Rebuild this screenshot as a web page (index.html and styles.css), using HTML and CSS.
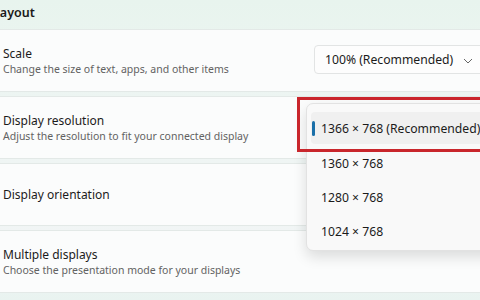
FILE: index.html
```html
<!DOCTYPE html>
<html>
<head>
<meta charset="utf-8">
<link rel="stylesheet" href="styles.css">
</head>
<body>
<div class="page">
  <div class="heading">Layout</div>
  <div class="card">
    <div class="text">
      <div class="title">Scale</div>
      <div class="sub">Change the size of text, apps, and other items</div>
    </div>
    <div class="combo">
      <span>100% (Recommended)</span>
      <svg class="chev" width="10" height="6" viewBox="0 0 10 6"><path d="M1 1 L5 5 L9 1" fill="none" stroke="#666" stroke-width="1"/></svg>
    </div>
  </div>
  <div class="card">
    <div class="text">
      <div class="title">Display resolution</div>
      <div class="sub">Adjust the resolution to fit your connected display</div>
    </div>
  </div>
  <div class="card">
    <div class="text">
      <div class="title">Display orientation</div>
    </div>
  </div>
  <div class="card">
    <div class="text">
      <div class="title">Multiple displays</div>
      <div class="sub">Choose the presentation mode for your displays</div>
    </div>
  </div>
</div>
<div class="menu">
  <div class="item selected"><span class="bar"></span>1366 × 768 (Recommended)</div>
  <div class="item">1360 × 768</div>
  <div class="item">1280 × 768</div>
  <div class="item">1024 × 768</div>
</div>
<div class="highlight"></div>
</body>
</html>
```
FILE: styles.css
```css
html, body {
  margin: 0;
  padding: 0;
  width: 480px;
  height: 300px;
  overflow: hidden;
}
body {
  background: linear-gradient(180deg, #e8f4ee 0%, #eef5f3 40%, #f1f5f5 80%, #e9f3f0 100%);
  font-family: "Noto Sans", "Open Sans", sans-serif;
  color: #1b1b1b;
  position: relative;
}
.page {
  margin-left: -16px;
  width: 530px;
  display: flex;
  flex-direction: column;
  gap: 4px;
}
.heading {
  height: 25px;
  padding-left: 9px;
  font-size: 12.5px;
  font-weight: 600;
  line-height: 26px;
  color: #1a1a1a;
}
.card {
  height: 61px;
  background: #fbfcfc;
  border: 1px solid #e3e9e7;
  border-radius: 4px;
  display: flex;
  align-items: center;
  padding-left: 18px;
  position: relative;
}
.title {
  font-size: 12px;
  line-height: 17px;
  color: #1b1b1b;
}
.sub {
  font-size: 10.5px;
  line-height: 15px;
  color: #626262;
}
.combo {
  position: absolute;
  left: 329px;
  top: 15px;
  width: 200px;
  height: 29px;
  border: 1px solid #e2e4e4;
  border-radius: 4px;
  background: #fdfdfd;
  display: flex;
  align-items: center;
  padding-left: 10px;
  font-size: 12.2px;
  box-sizing: border-box;
}
.chev {
  position: absolute;
  left: 148px;
  top: 12px;
}
.menu {
  position: absolute;
  left: 306px;
  top: 103px;
  width: 200px;
  height: 148px;
  background: #f9f9f9;
  border: 1px solid #e2e2e2;
  border-radius: 7px;
  box-shadow: 0 6px 14px rgba(0,0,0,0.13);
  padding-top: 8px;
  box-sizing: border-box;
}
.item {
  height: 34px;
  display: flex;
  align-items: center;
  padding-left: 14px;
  font-size: 12.2px;
  color: #1b1b1b;
  position: relative;
}
.item.selected {
  margin: 0 4px;
  padding-left: 10px;
  height: 32px;
  margin-bottom: 2px;
  background: #f0f0f0;
  border-radius: 4px;
}
.bar {
  position: absolute;
  left: 1px;
  top: 9px;
  width: 3px;
  height: 15px;
  border-radius: 2px;
  background: #1a6fa8;
}
.highlight {
  position: absolute;
  left: 297px;
  top: 97px;
  width: 200px;
  height: 55px;
  border: 3px solid #c9262c;
  box-sizing: border-box;
}
```
